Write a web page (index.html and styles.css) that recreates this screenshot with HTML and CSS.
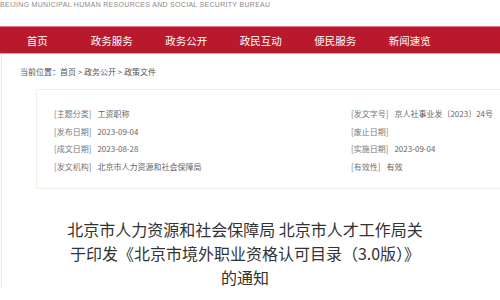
FILE: index.html
```html
<!DOCTYPE html>
<html lang="zh-CN">
<head>
    <meta charset="UTF-8">
    <meta name="viewport" content="width=device-width, initial-scale=1.0">
    <title>北京市人力资源和社会保障局</title>
    <link rel="stylesheet" href="styles.css">
</head>
<body>
    <div class="top-head">
        <div class="en-name">BEIJING MUNICIPAL HUMAN RESOURCES AND SOCIAL SECURITY BUREAU</div>
    </div>

    <div class="nav">
        <a class="nav-item" href="#">首页</a>
        <a class="nav-item" href="#">政务服务</a>
        <a class="nav-item" href="#">政务公开</a>
        <a class="nav-item" href="#">政民互动</a>
        <a class="nav-item" href="#">便民服务</a>
        <a class="nav-item" href="#">新闻速览</a>
    </div>

    <div class="main">
        <div class="crumbs">当前位置：首页 &gt; 政务公开 &gt; 政策文件</div>

        <!-- document info -->
        <div class="info-box">
            <div class="info-grid">
                <div class="info-row"><span class="label">[主题分类]</span><span class="val">工资职称</span></div>
                <div class="info-row"><span class="label">[发文字号]</span><span class="val">京人社事业发〔2023〕24号</span></div>
                <div class="info-row"><span class="label">[发布日期]</span><span class="val">2023-09-04</span></div>
                <div class="info-row"><span class="label">[废止日期]</span><span class="val"></span></div>
                <div class="info-row"><span class="label">[成文日期]</span><span class="val">2023-08-28</span></div>
                <div class="info-row"><span class="label">[实施日期]</span><span class="val">2023-09-04</span></div>
                <div class="info-row"><span class="label">[发文机构]</span><span class="val">北京市人力资源和社会保障局</span></div>
                <div class="info-row"><span class="label">[有效性]</span><span class="val">有效</span></div>
            </div>
        </div>

        <h1 class="doc-title">北京市人力资源和社会保障局 北京市人才工作局关于印发《北京市境外职业资格认可目录（3.0版）》<br>的通知</h1>
    </div>
</body>
</html>
```

FILE: styles.css
```css
body {
    margin: 0;
    background-color: #fff;
    font-family: "Noto Sans CJK SC", "Liberation Sans", sans-serif;
    color: #555;
    overflow: hidden;
}
.top-head {
    height: 26px;
}
.en-name {
    font-family: "Liberation Sans", Arial, sans-serif;
    font-size: 7px;
    line-height: 10px;
    color: #8a8a8a;
    letter-spacing: 0.3px;
    white-space: nowrap;
}
.nav {
    display: flex;
    height: 26px;
    background-color: #b8192c;
    border-top: 1px solid #dc7b86;
    border-bottom: 1px solid #e2a1a8;
}
.nav-item {
    width: 74.5px;
    text-align: center;
    color: #fff;
    text-decoration: none;
    font-size: 10.5px;
    line-height: 27px;
}
.main {
    border-left: 1px solid #e8e8e8;
    margin-left: 1px;
    padding-top: 11px;
}
.crumbs {
    padding-left: 18px;
    font-size: 8px;
    line-height: 14px;
    color: #555;
}
.info-box {
    margin: 10px -20px 0 34px;
    border: 1px solid #f2f0e6;
    padding: 15px 0 13px 17px;
}
.info-grid {
    display: grid;
    grid-template-columns: 297px 1fr;
}
.info-row {
    display: flex;
    gap: 6px;
    font-size: 8px;
    line-height: 17.5px;
    white-space: nowrap;
}
.label {
    color: #777;
}
.val {
    color: #666;
}
.doc-title {
    width: 368px;
    margin: 28px 0 0 59px;
    font-size: 16px;
    line-height: 24px;
    font-weight: normal;
    color: #333;
    text-align: center;
}
```
